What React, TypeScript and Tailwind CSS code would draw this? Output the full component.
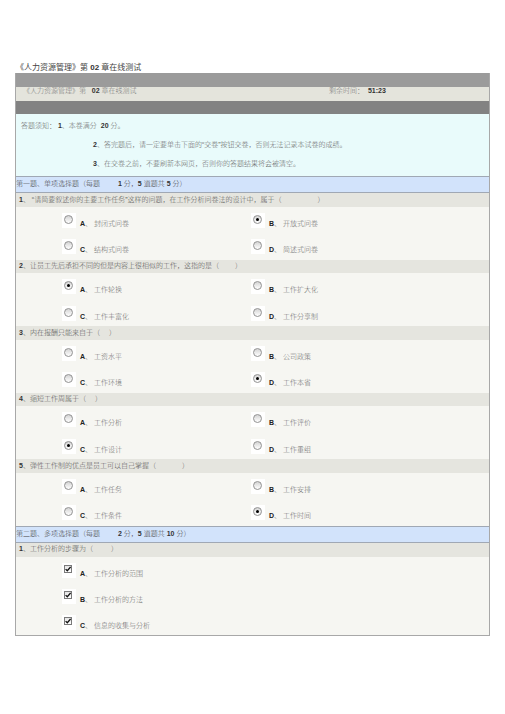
import React from 'react';

type Opt = { key: string; text: string; checked?: boolean };
type Question = { no: string; head: string; gap: string; options: Opt[] };

const single: Question[] = [
  {
    no: '1',
    head: '、 “请简要叙述你的主要工作任务”这样的问题，在工作分析问卷法的设计中，属于（',
    gap: 'w-[36px]',
    options: [
      { key: 'A', text: '封闭式问卷' },
      { key: 'B', text: '开放式问卷', checked: true },
      { key: 'C', text: '结构式问卷' },
      { key: 'D', text: '简述式问卷' },
    ],
  },
  {
    no: '2',
    head: '、让员工先后承担不同的但是内容上很相似的工作，这指的是（',
    gap: 'w-[16px]',
    options: [
      { key: 'A', text: '工作轮换', checked: true },
      { key: 'B', text: '工作扩大化' },
      { key: 'C', text: '工作丰富化' },
      { key: 'D', text: '工作分享制' },
    ],
  },
  {
    no: '3',
    head: '、内在报酬只能来自于（',
    gap: 'w-[9px]',
    options: [
      { key: 'A', text: '工资水平' },
      { key: 'B', text: '公司政策' },
      { key: 'C', text: '工作环境' },
      { key: 'D', text: '工作本省', checked: true },
    ],
  },
  {
    no: '4',
    head: '、缩短工作周属于（',
    gap: 'w-[9px]',
    options: [
      { key: 'A', text: '工作分析' },
      { key: 'B', text: '工作评价' },
      { key: 'C', text: '工作设计', checked: true },
      { key: 'D', text: '工作重组' },
    ],
  },
  {
    no: '5',
    head: '、弹性工作制的优点是员工可以自己掌握（',
    gap: 'w-[26px]',
    options: [
      { key: 'A', text: '工作任务' },
      { key: 'B', text: '工作安排' },
      { key: 'C', text: '工作条件' },
      { key: 'D', text: '工作时间', checked: true },
    ],
  },
];

const multi: Opt[] = [
  { key: 'A', text: '工作分析的范围', checked: true },
  { key: 'B', text: '工作分析的方法', checked: true },
  { key: 'C', text: '信息的收集与分析', checked: true },
];

function Radio({ checked }: { checked?: boolean }) {
  return (
    <span className="flex h-[9px] w-[9px] items-center justify-center rounded-full border border-[#929292] bg-gradient-to-b from-[#d4d4d4] to-white">
      {checked && <span className="h-[3px] w-[3px] rounded-full bg-black" />}
    </span>
  );
}

function Check() {
  return (
    <span className="flex h-[8px] w-[8px] items-center justify-center border border-[#7a7a7a] bg-gradient-to-b from-[#e4e4e4] to-white">
      <svg width="6" height="6" viewBox="0 0 6 6">
        <path d="M0.6 3.1 L2.3 4.8 L5.6 1" fill="none" stroke="#111" strokeWidth="1.3" />
      </svg>
    </span>
  );
}

function B({ children }: { children: React.ReactNode }) {
  return <span className="font-bold text-[#333]">{children}</span>;
}

function Choice({ opt, multiple }: { opt: Opt; multiple?: boolean }) {
  return (
    <div className="flex w-[189px]">
      <div className="mt-[6px] h-[15px] w-[14px] bg-white pl-[2px] pt-[2px]">
        {multiple ? <Check /> : <Radio checked={opt.checked} />}
      </div>
      <span className="ml-[4px] mt-[13px] font-light leading-[8px] text-[#6a6a6a]">
        <span className="font-bold text-[#222]">{opt.key}</span>、 {opt.text}
      </span>
    </div>
  );
}

function QHead({ no, head, gap, h }: { no: string; head: string; gap: string; h: string }) {
  return (
    <div className={`flex items-center bg-[#e5e5df] pl-[3px] font-light text-[#555] ${h}`}>
      <B>{no}</B>
      <span className="whitespace-pre">{head}</span>
      <span className={`inline-block ${gap}`} />
      <span>）</span>
    </div>
  );
}

export default function App() {
  return (
    <div className="min-h-screen bg-white pl-[15px] pt-[63px] font-['Liberation_Sans','Noto_Sans_CJK_SC',sans-serif] text-[7px]">
      <div className="pl-[1px] text-[8px] leading-[10px] text-[#444]">
        《人力资源管理》第 <B>02</B> 章在线测试
      </div>

      <div className="w-[475px] border-x border-b border-[#a8a8a8]">
        <div className="h-[14px] bg-[#9b9b9b]" />
        <div className="flex h-[14px] bg-[#e4e4dc] pl-[7px] font-light leading-[7px] text-[#777]">
          <span className="w-[306px] whitespace-pre">
            《人力资源管理》第   <B>02</B> 章在线测试
          </span>
          <span className="whitespace-pre">
            剩余时间：  <B>51:23</B>
          </span>
        </div>
        <div className="h-[13px] bg-[#828282]" />

        <div className="h-[62px] bg-[#e9fbfb] pt-[2px] font-light leading-[19px] text-[#666]">
          <div className="whitespace-pre pl-[5px]">
            答题须知： <B>1</B>、本卷满分  <B>20</B> 分。
          </div>
          <div className="pl-[77px]">
            <B>2</B>、答完题后，请一定要单击下面的“交卷”按钮交卷，否则无法记录本试卷的成绩。
          </div>
          <div className="pl-[77px]">
            <B>3</B>、在交卷之前，不要刷新本网页，否则你的答题结果将会被清空。
          </div>
        </div>

        <div className="flex h-[17px] items-center border-y border-[#a0a8b4] bg-[#d2e3fb] font-light whitespace-pre text-[#444]">
          第一题、单项选择题（每题<span className="inline-block w-[18px]" /><B>1</B> 分，<B>5</B> 道题共 <B>5</B> 分）
        </div>

        {single.map((q) => (
          <div key={q.no}>
            <QHead no={q.no} head={q.head} gap={q.gap} h="h-[13.5px]" />
            <div className="flex h-[26.5px] bg-[#f6f6f2] pl-[46px]">
              <Choice opt={q.options[0]} />
              <Choice opt={q.options[1]} />
            </div>
            <div className="flex h-[26.5px] bg-[#f6f6f2] pl-[46px]">
              <Choice opt={q.options[2]} />
              <Choice opt={q.options[3]} />
            </div>
          </div>
        ))}

        <div className="flex h-[17px] items-center border-y border-[#a0a8b4] bg-[#d2e3fb] font-light whitespace-pre text-[#444]">
          第二题、多项选择题（每题<span className="inline-block w-[18px]" /><B>2</B> 分，<B>5</B> 道题共 <B>10</B> 分）
        </div>
        <QHead no="1" head="、工作分析的步骤为（" gap="w-[18px]" h="h-[14px]" />
        {multi.map((o) => (
          <div key={o.key} className="flex h-[26px] bg-[#f6f6f2] pl-[46px]">
            <Choice opt={o} multiple />
          </div>
        ))}
      </div>
    </div>
  );
}
